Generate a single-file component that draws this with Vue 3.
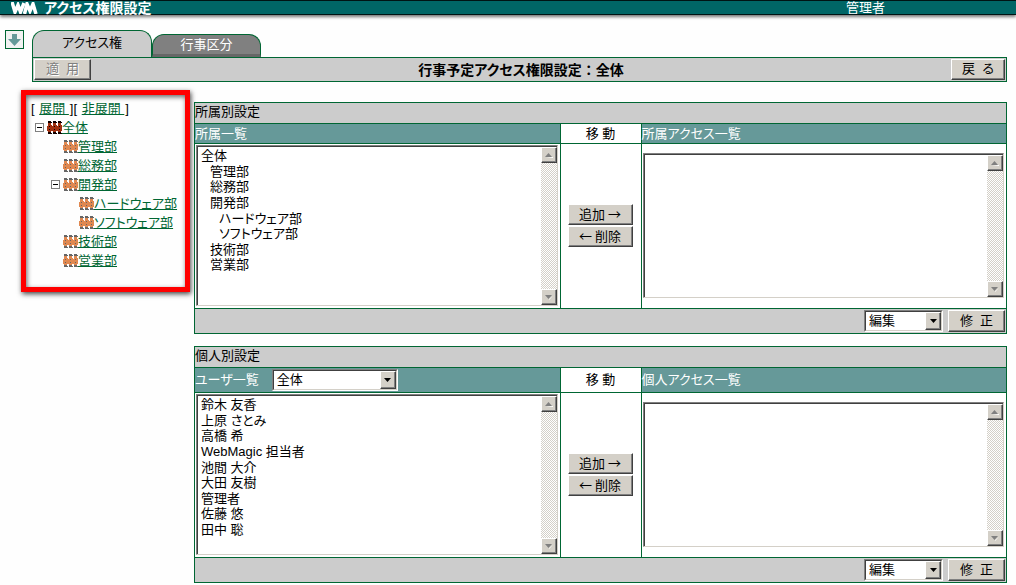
<script setup>
import { ref } from 'vue'

const tree = [
  { name: '全体', level: 0, open: true, root: true },
  { name: '管理部', level: 1 },
  { name: '総務部', level: 1 },
  { name: '開発部', level: 1, open: true },
  { name: 'ハードウェア部', level: 2 },
  { name: 'ソフトウェア部', level: 2 },
  { name: '技術部', level: 1 },
  { name: '営業部', level: 1 },
]

const panels = [
  {
    id: 'dept',
    title: '所属別設定',
    source: '所属一覧',
    target: '所属アクセス一覧',
    items: tree.map((n) => ({ name: n.name, level: n.level })),
  },
  {
    id: 'user',
    title: '個人別設定',
    source: 'ユーザ一覧',
    target: '個人アクセス一覧',
    filter: true,
    items: [
      '鈴木 友香',
      '上原 さとみ',
      '高橋 希',
      'WebMagic 担当者',
      '池間 大介',
      '大田 友樹',
      '管理者',
      '佐藤 悠',
      '田中 聡',
    ].map((name) => ({ name, level: 0 })),
  },
]

const filter = ref('全体')
const people = [0, 5, 10]
</script>

<template>
  <div class="page">
    <header class="topbar">
      <svg class="logo" width="27" height="12" viewBox="0 0 27 12" aria-label="WM">
        <path d="M1 0 L4 10 L7 3 L9.500 10 L13 1" fill="none" stroke="#fff" stroke-width="3.500" />
        <path d="M13.500 12 L16 2 L19 9 L22 2 L25 12" fill="none" stroke="#fff" stroke-width="3.500" />
      </svg>
      <h1>アクセス権限設定</h1>
      <span class="account">管理者</span>
    </header>

    <div class="top">
      <button class="down" aria-label="メニューを開く">
        <svg width="13" height="12" viewBox="0 0 13 12"><path d="M4 0h5v5h4L6.500 12 0 5h4z" fill="#699" /></svg>
      </button>
      <div class="main">
        <nav class="tabs">
          <button class="tab active">アクセス権</button>
          <button class="tab">行事区分</button>
        </nav>
        <div class="toolbar">
          <button class="btn apply" disabled>適&nbsp; 用</button>
          <h2>行事予定アクセス権限設定<span class="colon">：</span>全体</h2>
          <button class="btn back">戻&nbsp; る</button>
        </div>
      </div>
    </div>

    <div class="content">
      <aside class="tree">
        <p class="toggles">[ <a href="#">展開 </a>][ <a href="#">非展開 </a>]</p>
        <ul>
          <li v-for="n in tree" :key="n.name" :class="'level' + n.level">
            <span class="slot">
              <button v-if="n.open" class="fold" aria-label="折りたたむ">
                <svg width="9" height="9" viewBox="0 0 9 9" shape-rendering="crispEdges">
                  <path d="M0 0h9v9H0z" fill="#808080" /><path d="M1 1h7v7H1z" fill="#fff" /><path d="M2 4h5v1H2z" fill="#000" />
                </svg>
              </button>
            </span>
            <svg class="people" :class="{ dark: n.root }" width="15" height="14" viewBox="0 0 15 14" shape-rendering="crispEdges">
              <g v-for="x in people" :key="x" :transform="`translate(${x})`">
                <path class="body" d="M1 1h3v3h1v6H4v2H1v-2H0V5h1z" />
                <path class="hair" d="M1 0h3v1h1v1H1z" />
                <path class="hair" d="M2 5h1v1H2zM2 8h1v1H2zM1 11h3v1H1zM1 12h4v1H1z" />
              </g>
            </svg>
            <a href="#">{{ n.name }}</a>
          </li>
        </ul>
      </aside>

      <main class="panels">
        <section v-for="p in panels" :key="p.id" class="panel">
          <h3>{{ p.title }}</h3>
          <div class="grid">
            <div class="head">
              <label :for="p.id + '-src'">{{ p.source }}</label>
              <span v-if="p.filter" class="combo wide">
                <select v-model="filter" aria-label="グループ"><option>全体</option></select>
                <span class="arrow"><svg width="7" height="4" viewBox="0 0 7 4"><path d="M0 0h7L3.500 4z" /></svg></span>
              </span>
            </div>
            <div class="head mid">移 動</div>
            <div class="head"><label :for="p.id + '-dst'">{{ p.target }}</label></div>

            <div class="cell">
              <div class="listbox">
                <select :id="p.id + '-src'" multiple size="10">
                  <option v-for="i in p.items" :key="i.name" :class="'depth' + i.level">{{ i.name }}</option>
                </select>
                <div class="scroll" aria-hidden="true">
                  <span class="cap"><svg width="8" height="5" viewBox="0 0 8 5"><path d="M1 5h7V4z" fill="#fff" /><path d="M0 4h7L3.500 0z" fill="#808080" /></svg></span>
                  <span class="cap"><svg width="8" height="5" viewBox="0 0 8 5"><path d="M8 1 4 5V4z" fill="#fff" /><path d="M0 0h7L3.500 4z" fill="#808080" /></svg></span>
                </div>
              </div>
            </div>
            <div class="cell move">
              <button class="btn">追加 →</button>
              <button class="btn">← 削除</button>
            </div>
            <div class="cell target">
              <div class="listbox">
                <select :id="p.id + '-dst'" multiple size="9"></select>
                <div class="scroll" aria-hidden="true">
                  <span class="cap"><svg width="8" height="5" viewBox="0 0 8 5"><path d="M1 5h7V4z" fill="#fff" /><path d="M0 4h7L3.500 0z" fill="#808080" /></svg></span>
                  <span class="cap"><svg width="8" height="5" viewBox="0 0 8 5"><path d="M8 1 4 5V4z" fill="#fff" /><path d="M0 0h7L3.500 4z" fill="#808080" /></svg></span>
                </div>
              </div>
            </div>
          </div>
          <footer class="foot">
            <span class="combo">
              <select aria-label="操作"><option>編集</option></select>
              <span class="arrow"><svg width="7" height="4" viewBox="0 0 7 4"><path d="M0 0h7L3.500 4z" /></svg></span>
            </span>
            <button class="btn fix">修&nbsp; 正</button>
          </footer>
        </section>
      </main>
    </div>
  </div>
</template>

<style>
body {
  background: #fefefe;
}
</style>

<style scoped>
.page,
button,
select {
  font-family: 'Liberation Sans', 'Noto Sans CJK JP', sans-serif;
  font-size: 13px;
  line-height: 18px;
  font-feature-settings: 'palt';
  color: #000;
}
.page *,
.page {
  box-sizing: border-box;
}
h1,
h2,
h3,
p,
ul {
  margin: 0;
  padding: 0;
  font-weight: normal;
  list-style: none;
}
h1,
h2 {
  font-size: 14px;
  font-weight: bold;
}
h3 {
  font-size: 13px;
}
.colon {
  font-feature-settings: normal;
}
button,
select {
  margin: 0;
  padding: 0;
  border: 0;
  border-radius: 0;
}
a {
  color: #063;
}

.topbar {
  display: flex;
  align-items: center;
  height: 15px;
  padding-left: 11px;
  border: solid #001414;
  border-width: 1px 0;
  background: #066;
  color: #fff;
  box-shadow: 0 2px 3px #777;
}
.topbar h1 {
  flex: 1;
  margin-left: 6px;
}
.account {
  width: 170px;
}

.top {
  display: flex;
  align-items: flex-start;
  gap: 8px;
  padding: 15px 9px 0 5px;
}
.down {
  display: grid;
  place-items: center;
  width: 19px;
  height: 19px;
  border: 1px solid #063;
  background: #f2f2f2;
}
.main {
  flex: 1;
}
.tabs {
  display: flex;
  align-items: flex-end;
}
.tab {
  width: 109px;
  height: 23px;
  border: 1px solid #063;
  border-bottom: 3px solid #666;
  border-radius: 12px 12px 0 0;
  background: #808080;
  color: #fff;
}
.tab.active {
  width: 120px;
  height: 27px;
  padding-bottom: 2px;
  border-bottom: 0;
  background: #ccc;
  color: #000;
}
.toolbar {
  display: flex;
  align-items: center;
  padding: 1px;
  border: 1px solid #063;
  background: #ccc;
}
.toolbar h2 {
  flex: 1;
  text-align: center;
}

.btn {
  height: 21px;
  padding-bottom: 1px;
  border: 1px solid;
  border-color: #fff #404040 #404040 #fff;
  background: #d4d0c8;
  box-shadow: inset -1px -1px #808080;
}
.btn:disabled {
  color: #808080;
  text-shadow: 1px 1px #fff;
}
.apply,
.fix {
  width: 57px;
}
.back {
  width: 54px;
}

.content {
  display: flex;
  align-items: flex-start;
  padding: 8px 9px 0 21px;
}
.tree {
  width: 169px;
  min-height: 202px;
  padding: 5px;
  border: 5px solid #f00;
  box-shadow: 1px 2px 5px #444, inset 1px 2px 5px #666;
}
.toggles {
  white-space: nowrap;
}
.toggles a {
  margin: 0 1px;
}
.tree li {
  display: flex;
  align-items: center;
  height: 19px;
  padding-left: 4px;
  white-space: nowrap;
}
.tree li.level1 {
  padding-left: 20px;
}
.tree li.level2 {
  padding-left: 36px;
}
.slot {
  display: flex;
  width: 12px;
}
.fold {
  display: flex;
}
.people .hair {
  fill: #666;
}
.people .body {
  fill: #e08850;
}
.people.dark .hair {
  fill: #100;
}
.people.dark .body {
  fill: #a03010;
}

.panels {
  flex: 1;
  display: flex;
  flex-direction: column;
  gap: 12px;
  margin: 12px 0 0 4px;
}
.panel {
  border: 1px solid #063;
  background: #ccc;
}
.panel h3 {
  height: 20px;
  line-height: 18px;
}
.grid {
  display: grid;
  grid-template-columns: minmax(0, 1fr) 80px minmax(0, 1fr);
  gap: 1px;
  padding: 1px 0;
  background: #063;
}
.head {
  display: flex;
  align-items: center;
  min-height: 19px;
  background: #699;
  color: #fff;
}
.head.mid {
  justify-content: center;
  background: #fff;
  color: #000;
}
.cell {
  height: 164px;
  padding: 1px 2px 2px 1px;
  background: #fff;
}
.cell.target {
  padding: 9px 2px 10px 1px;
}
.move {
  display: flex;
  flex-direction: column;
  align-items: center;
  justify-content: center;
  gap: 1px;
}
.move .btn {
  width: 65px;
  font-family: 'Noto Sans CJK JP', sans-serif;
}

.listbox {
  display: flex;
  height: 100%;
  border: 1px solid;
  border-color: #808080 #d4d0c8 #d4d0c8 #808080;
  background: #fff;
}
.listbox select {
  flex: 1;
  height: 100%;
  min-width: 0;
  border: solid #404040;
  border-width: 1px 0 0 1px;
  background: #fff;
  overflow: hidden;
  outline: none;
}
.listbox option {
  display: flex;
  align-items: center;
  height: 1.2em;
  min-height: 0;
  padding: 0 3px;
}
.listbox .depth1 {
  padding-left: 12px;
}
.listbox .depth2 {
  padding-left: 21px;
}
.scroll {
  display: flex;
  flex-direction: column;
  justify-content: space-between;
  width: 16px;
  border-top: 1px solid #404040;
  background: repeating-conic-gradient(#d4d0c8 0 25%, #fff 0 50%) 0 0 / 2px 2px;
}
.cap,
.arrow {
  display: grid;
  place-items: center;
  width: 16px;
  height: 16px;
  border: 1px solid;
  border-color: #fff #404040 #404040 #fff;
  background: #d4d0c8;
  box-shadow: inset -1px -1px #808080;
}

.combo {
  position: relative;
  display: flex;
  width: 79px;
  height: 22px;
  border: 1px solid;
  border-color: #808080 #fff #fff #808080;
}
.combo.wide {
  width: 126px;
  margin: 1px 0 1px 13px;
}
.combo select {
  width: 100%;
  appearance: none;
  padding-left: 3px;
  border: 1px solid;
  border-color: #404040 #d4d0c8 #d4d0c8 #404040;
  background: #fff;
}
.arrow {
  position: absolute;
  top: 1px;
  right: 1px;
  height: 18px;
  pointer-events: none;
}
.foot {
  display: flex;
  align-items: center;
  justify-content: flex-end;
  gap: 5px;
  padding: 1px;
}
.foot .btn {
  height: 22px;
}
</style>
